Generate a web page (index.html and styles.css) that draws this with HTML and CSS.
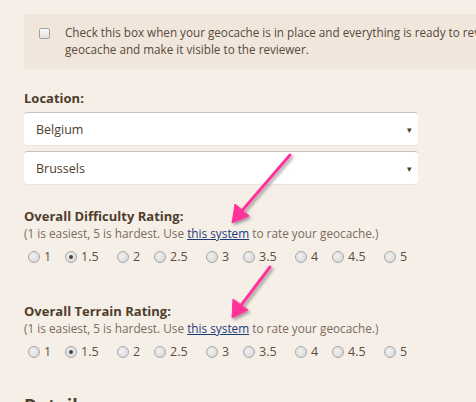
FILE: index.html
```html
<!DOCTYPE html>
<html>
<head>
<meta charset="utf-8">
<link rel="stylesheet" href="styles.css">
</head>
<body>
<div class="page">
  <div class="notice">
    <span class="check"></span>
    <p class="notice-text">Check this box when your geocache is in place and everything is ready to review. This will submit your<br>geocache and make it visible to the reviewer.</p>
  </div>

  <section class="field location">
    <h3 class="label">Location:</h3>
    <div class="select"><span>Belgium</span><span class="caret">&#9662;</span></div>
    <div class="select"><span>Brussels</span><span class="caret">&#9662;</span></div>
  </section>

  <section class="field rating">
    <h3 class="label">Overall Difficulty Rating:</h3>
    <p class="hint">(1 is easiest, 5 is hardest. Use <a href="#">this system</a> to rate your geocache.)</p>
    <div class="radios">
      <label><span class="radio"></span>1</label>
      <label><span class="radio on"></span>1.5</label>
      <label><span class="radio"></span>2</label>
      <label><span class="radio"></span>2.5</label>
      <label><span class="radio"></span>3</label>
      <label><span class="radio"></span>3.5</label>
      <label><span class="radio"></span>4</label>
      <label><span class="radio"></span>4.5</label>
      <label><span class="radio"></span>5</label>
    </div>
  </section>

  <section class="field rating terrain">
    <h3 class="label">Overall Terrain Rating:</h3>
    <p class="hint">(1 is easiest, 5 is hardest. Use <a href="#">this system</a> to rate your geocache.)</p>
    <div class="radios">
      <label><span class="radio"></span>1</label>
      <label><span class="radio on"></span>1.5</label>
      <label><span class="radio"></span>2</label>
      <label><span class="radio"></span>2.5</label>
      <label><span class="radio"></span>3</label>
      <label><span class="radio"></span>3.5</label>
      <label><span class="radio"></span>4</label>
      <label><span class="radio"></span>4.5</label>
      <label><span class="radio"></span>5</label>
    </div>
  </section>

  <h2 class="details">Details</h2>
</div>

<svg class="arrows" width="476" height="402" viewBox="0 0 476 402">
  <defs>
    <filter id="sh" x="-20%" y="-20%" width="160%" height="160%">
      <feDropShadow dx="2" dy="2" stdDeviation="1.5" flood-color="#000" flood-opacity="0.35"/>
    </filter>
  </defs>
  <g filter="url(#sh)" fill="#ff3399" stroke="#ff3399">
    <line x1="290" y1="155" x2="240" y2="213" stroke-width="3" stroke-linecap="round"/>
    <polygon points="232,223 235,204 249,216" stroke-width="1" stroke-linejoin="round"/>
    <line x1="270" y1="267" x2="239" y2="308" stroke-width="3" stroke-linecap="round"/>
    <polygon points="232,318 233,299 248,310" stroke-width="1" stroke-linejoin="round"/>
  </g>
</svg>
</body>
</html>
```
FILE: styles.css
```css
html, body {
  margin: 0;
  padding: 0;
  background: #f6efe8;
  overflow: hidden;
}
body {
  width: 476px;
  height: 402px;
  position: relative;
  font-family: "Open Sans", "Liberation Sans", sans-serif;
  color: #594a3b;
}
.page {
  padding: 14px 0 0 24px;
  width: 600px;
}
.notice {
  background: #f1e6db;
  border-radius: 3px;
  display: flex;
  align-items: flex-start;
  padding: 10px 0 9px 15px;
  height: 36px;
}
.check {
  width: 9px;
  height: 9px;
  border: 1px solid #a9a29b;
  border-radius: 2px;
  background: linear-gradient(#fafafa, #e2e2e2);
  margin-top: 4px;
  flex: none;
}
.notice-text {
  margin: 0 0 0 15px;
  font-size: 11.7px;
  line-height: 17px;
  white-space: nowrap;
}
.field {
  margin: 0;
}
.label {
  margin: 0;
  font-size: 13px;
  font-weight: 700;
  color: #4e3d2c;
  line-height: 18px;
}
.location {
  padding-top: 20px;
}
.location .label {
  margin-bottom: 5px;
}
.select {
  width: 394px;
  height: 33px;
  box-sizing: border-box;
  background: #fff;
  border-top: 1px solid #c8c2bc;
  border-radius: 3px;
  box-shadow: 0 1px 1px rgba(0,0,0,0.05);
  display: flex;
  align-items: center;
  justify-content: space-between;
  padding: 0 6px 0 12px;
  font-size: 12.5px;
  color: #4e3d2c;
  margin-bottom: 6px;
}
.caret {
  font-size: 9px;
  color: #4a3a2a;
}
.rating {
  padding-top: 17px;
}
.terrain {
  padding-top: 36px;
}
.hint {
  margin: 0;
  font-size: 11.8px;
  line-height: 17px;
  color: #7a6b5c;
}
.hint a {
  color: #1b3a7a;
  text-decoration: underline;
}
.radios {
  display: grid;
  grid-template-columns: repeat(4, 37px 52px) 37px;
  padding: 6px 0 0 4px;
  font-size: 12.5px;
  line-height: 18px;
  color: #5c4d3e;
}
.radios label {
  display: flex;
  align-items: center;
  white-space: nowrap;
}
.radio {
  width: 10px;
  height: 10px;
  border-radius: 50%;
  border: 1px solid #a8a8a8;
  background: radial-gradient(circle at 40% 40%, #f2f2f2, #d2d2d2);
  margin-right: 4px;
  position: relative;
  flex: none;
}
.radio.on::after {
  content: "";
  position: absolute;
  left: 3px;
  top: 3px;
  width: 4px;
  height: 4px;
  border-radius: 50%;
  background: #444;
}
.details {
  margin: 32px 0 0;
  font-size: 18px;
  font-weight: 700;
  color: #4e3d2c;
}
.arrows {
  position: absolute;
  left: 0;
  top: 0;
  pointer-events: none;
}
```
